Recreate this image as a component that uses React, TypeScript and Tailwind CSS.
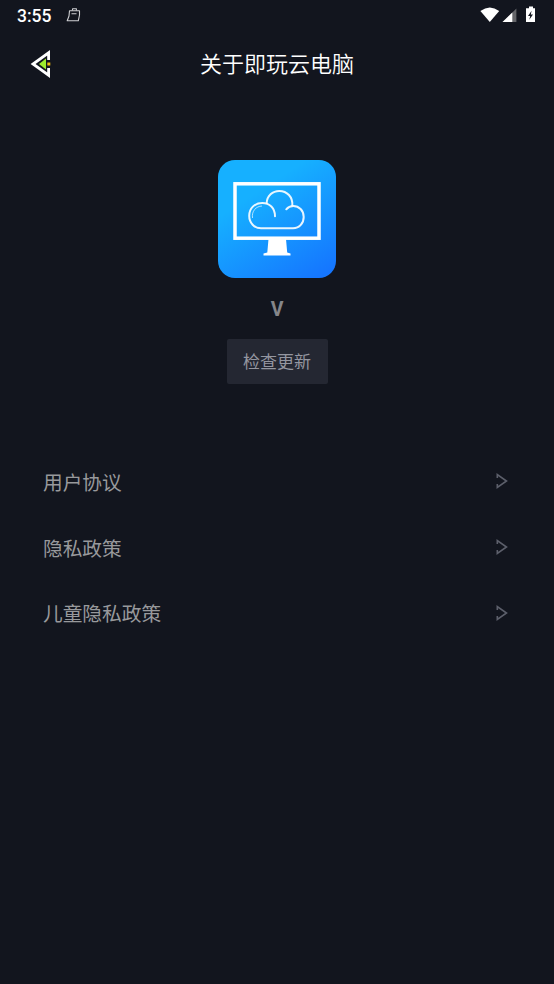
const rows = ["用户协议", "隐私政策", "儿童隐私政策"];

function StatusBar() {
  return (
    <div className="flex h-[30px] items-center pl-[17px] pr-[17px]">
      <span className="pt-px font-[Roboto,sans-serif] text-[17.5px] font-medium leading-[30px] text-white">3:55</span>
      <svg className="ml-[15px]" width="15" height="16" viewBox="0 0 15 16" fill="none" stroke="#cfd0d3" strokeWidth="1.1">
        <path d="M3.5 3.8H13.500V8l-1.200 5.800H1.200L3 9z" strokeLinejoin="round" />
        <path d="M6.300 3.500l.4-1.800h3.600l.2 1.800M5.500 6.800h5" />
      </svg>
      <svg className="ml-auto" width="58" height="18" viewBox="0 0 58 18">
        <path d="M1.4 5Q10.800-2 20.200 5L10.800 16z" fill="#fff" />
        <path d="M37.4 2.500V16H23.500z" fill="#646569" />
        <path d="M33.300 6.500V16H23.500z" fill="#fff" />
        <path d="M50 .5h4v1.800h2V16h-9V2.300h3z" fill="#fff" />
        <path d="M52.600 4.800L49 10h2.200l-.9 3.800 3.700-5.400h-2.200z" fill="#12151e" />
      </svg>
    </div>
  );
}

function AppLogo() {
  return (
    <svg width="118" height="118" viewBox="0 0 118 118" fill="none">
      <defs>
        <linearGradient id="logo" x1="0.2" y1="0" x2="0.85" y2="1">
          <stop offset="0.25" stopColor="#16b0ff" />
          <stop offset="1" stopColor="#1576ff" />
        </linearGradient>
      </defs>
      <rect width="118" height="118" rx="17" fill="url(#logo)" />
      <rect x="17" y="23.8" width="84" height="54.4" stroke="#fff" strokeWidth="3.5" />
      <path d="M50.5 79H68l1.2 13.5 3.3 1v2h-27v-2l3.8-1z" fill="#fff" />
      <g stroke="#fff" strokeOpacity="0.9" strokeWidth="2" strokeLinecap="round">
        <path d="M57 56.3C57 48 51.5 43 44.3 43C36.5 43 31.2 48.5 31.2 55.8C31.2 63 36.5 68.3 43 68.3H75C81.5 68.3 85.7 63 85.7 57C85.7 50.5 81 46 75.3 46C72.5 46 70 47.2 68.3 49.3" />
        <path d="M48.7 43C49 36 54.5 30.9 61.3 30.9C69 30.9 75 37 74.3 45.5" />
      </g>
      <path d="M34.5 58C33.5 51 38 46.3 44 46" stroke="#fff" strokeOpacity="0.65" strokeWidth="1" />
    </svg>
  );
}

export default function App() {
  return (
    <div className="flex h-[984px] w-[554px] flex-col bg-[#12151e] font-['Noto_Sans_CJK_SC',sans-serif]">
      <StatusBar />
      <header className="grid h-[68px] grid-cols-[1fr_auto_1fr] items-center">
        <svg className="ml-[30px]" width="22" height="30" viewBox="0 0 22 30">
          <path d="M18.6 11V3.8L3 15l15.6 11.2V19" fill="none" stroke="#fff" strokeWidth="2.8" />
          <path d="M9 15l7-5.5v11z" fill="#9ceb2e" />
          <path d="M17.3 13.5h3v3h-3z" fill="#edbd10" />
        </svg>
        <h1 className="pb-1 text-[22px] font-[350] leading-8 text-white">关于即玩云电脑</h1>
      </header>
      <section className="mt-[62px] flex flex-col items-center">
        <AppLogo />
        <div className="mt-[17px] font-[Roboto,sans-serif] text-[19.5px] font-bold leading-[29px] text-[#85868a]">V</div>
        <button className="mt-[15px] h-[45px] w-[101px] rounded-[2px] bg-[#242732] pb-px text-[17px] leading-[44px] text-[#9496a0]">检查更新</button>
      </section>
      <ul className="mt-[64.4px]">
        {rows.map((label) => (
          <li key={label} className="flex h-[65.8px] items-center justify-between pl-[43px] pr-[45px]">
            <span className="pt-px text-[19.7px] leading-[30px] text-[#98999c]">{label}</span>
            <svg width="14" height="18" viewBox="0 0 14 18" fill="none" stroke="#5c5f6b" strokeWidth="1.6">
              <path d="M2.3 6V2.5L11.5 9l-9.2 6.5V12" />
            </svg>
          </li>
        ))}
      </ul>
    </div>
  );
}
